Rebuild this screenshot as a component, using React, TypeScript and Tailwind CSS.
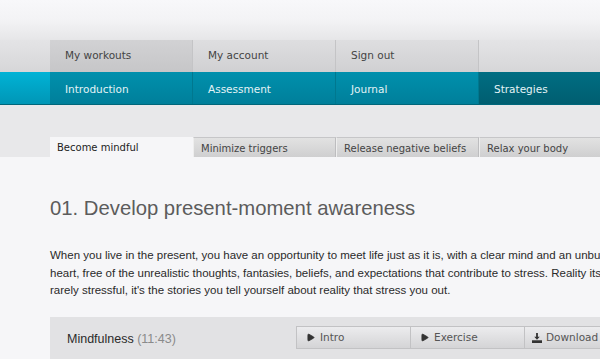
import { Play } from "lucide-react";

const navFont = { fontFamily: '"DejaVu Sans", Verdana, sans-serif' };

const topTabs = ["My workouts", "My account", "Sign out"];
const mainTabs = ["Introduction", "Assessment", "Journal"];
const subTabs = ["Minimize triggers", "Release negative beliefs", "Relax your body"];

function DownloadIcon() {
  return (
    <svg width="10" height="10" viewBox="0 0 11 11" className="mr-[4px]">
      <path d="M4.5 0h2v4h2L5.5 7.5 2.5 4h2z" fill="#333" />
      <rect x="0" y="8" width="11" height="3" fill="#333" />
    </svg>
  );
}

export default function App() {
  return (
    <div className="w-[600px] h-[359px] overflow-hidden bg-[#f6f6f8]" style={{ fontFamily: '"Liberation Sans", Arial, sans-serif' }}>
      <div className="w-[720px]">
        {/* top spacer with gradient */}
        <div className="h-[40px] bg-gradient-to-b from-[#f8f8fa] via-[#f3f3f5] to-[#e6e6e8]" />

        {/* account row */}
        <div className="flex h-[32px] bg-gradient-to-b from-[#e4e4e6] to-[#d6d6d8] text-[10.5px] text-[#444]" style={navFont}>
          <div className="w-[50px]" />
          {topTabs.map((t, i) => (
            <div
              key={t}
              className={`flex items-center pl-[15px] w-[143px] border-r border-[#c4c4c6] ${i === 0 ? "bg-gradient-to-b from-[#d2d2d4] to-[#c6c6c8]" : "bg-gradient-to-b from-[#dedee0] to-[#d0d0d2]"}`}
            >
              {t}
            </div>
          ))}
        </div>

        {/* teal row */}
        <div className="flex h-[33px] bg-gradient-to-b from-[#00b3d6] to-[#0096b6] border-b border-[#00667a] text-[10.5px] text-[#e4f3f6]" style={navFont}>
          <div className="w-[50px]" />
          {mainTabs.map((t) => (
            <div key={t} className="flex items-center pl-[15px] pt-[3px] w-[143px] bg-gradient-to-b from-[#0090ad] to-[#007f9a] border-r border-[#00788f]">
              {t}
            </div>
          ))}
          <div className="flex items-center pl-[15px] pt-[3px] flex-1 bg-gradient-to-b from-[#006e83] to-[#005e70]">Strategies</div>
        </div>

        <div className="h-[32px] bg-[#e8e8ea]" />

        {/* sub tabs */}
        <div className="flex h-[20px] bg-[#e8e8ea] text-[10px] text-[#444]" style={navFont}>
          <div className="w-[50px]" />
          <div className="flex items-center pl-[7px] pt-[1px] w-[143px] bg-[#f6f6f8] text-[#222]">Become mindful</div>
          {subTabs.map((t) => (
            <div
              key={t}
              className="flex items-center pl-[7px] pt-[1px] w-[143px] bg-gradient-to-b from-[#e2e2e2] to-[#cfcfd0] border-t border-[#c6c6c8] border-l border-l-[#eeeeee] border-r border-r-[#bdbdbf]"
            >
              {t}
            </div>
          ))}
        </div>

        {/* content */}
        <div className="pl-[50px] pt-[37px]">
          <h1 className="text-[20.3px] leading-[28px] text-[#5c5c5c] font-normal">
            01. Develop present-moment awareness
          </h1>
          <p className="mt-[25px] text-[11.5px] leading-[17.5px] text-[#2a2a2a] whitespace-nowrap">
            When you live in the present, you have an opportunity to meet life just as it is, with a clear mind and an unburdened
            <br />
            heart, free of the unrealistic thoughts, fantasies, beliefs, and expectations that contribute to stress. Reality itself is
            <br />
            rarely stressful, it's the stories you tell yourself about reality that stress you out.
          </p>

          <div className="mt-[17px] h-[60px] bg-[#e2e2e4] flex items-start pt-[9px]">
            <div className="w-[246px] pl-[17px] pt-[4px] text-[12.5px] text-[#2a2a2a]">
              Mindfulness <span className="text-[#8a8a8a]">(11:43)</span>
            </div>
            <div className="flex h-[23px] text-[10.5px] text-[#555]" style={navFont}>
              <button className="w-[115px] flex items-center pl-[9px] pt-[1px] bg-gradient-to-b from-[#ececee] to-[#d4d4d6] border border-[#c2c2c4]">
                <Play size={9} fill="#333" stroke="#333" className="mr-[5px]" />
                Intro
              </button>
              <button className="w-[114px] flex items-center pl-[9px] pt-[1px] bg-gradient-to-b from-[#ececee] to-[#d4d4d6] border border-l-0 border-[#c2c2c4]">
                <Play size={9} fill="#333" stroke="#333" className="mr-[5px]" />
                Exercise
              </button>
              <button className="w-[114px] flex items-center pl-[7px] pt-[1px] bg-gradient-to-b from-[#ececee] to-[#d4d4d6] border border-l-0 border-[#c2c2c4]">
                <DownloadIcon />
                Download
              </button>
            </div>
          </div>
        </div>
      </div>
    </div>
  );
}
